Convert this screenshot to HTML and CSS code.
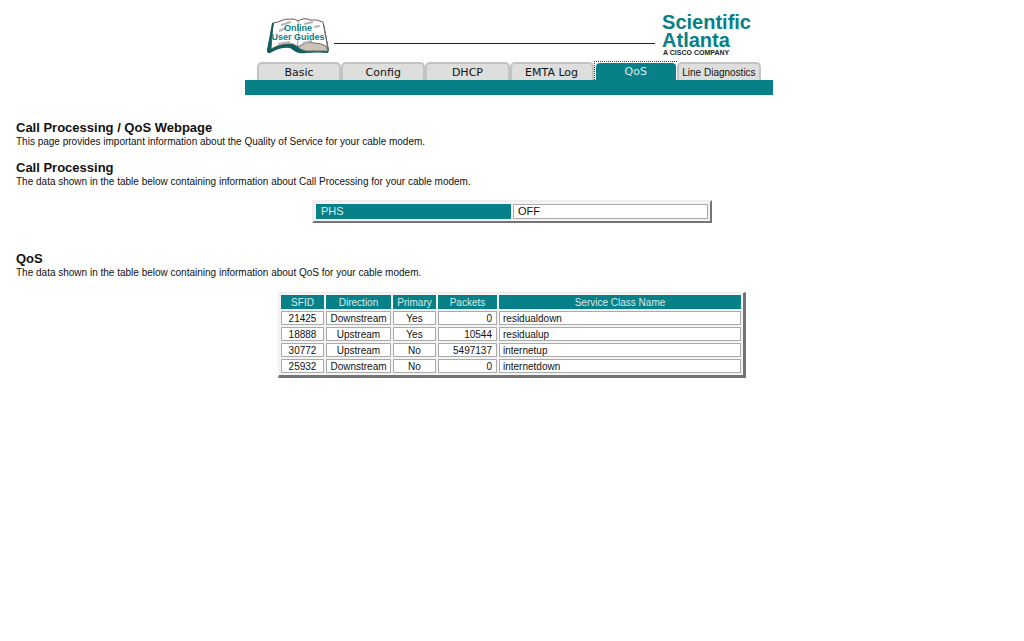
FILE: index.html
```
<!DOCTYPE html>
<html lang="en">
<head>
<meta charset="utf-8">
<title>Call Processing / QoS Webpage</title>
<link rel="stylesheet" href="styles.css">
</head>
<body>
<header class="masthead">
  <div class="masthead-inner">
    <div class="brand-row">
      <a class="guides" href="#guides" aria-label="Online User Guides">
        <svg width="64" height="40" viewBox="0 0 64 40">
          <path d="M7 7 L1 34 Q1 38 4 37 Q14 31 24 32 L30 36 Q34 38 40 37 Q52 36 62 37 L63 34 L58 8Z" fill="#0b5f60"/>
          <path d="M7 7 L12 6 Q20 2 26 3 Q30 3 32 5 Q38 1 44 4 Q50 3 57 6 L62 33 Q45 28 32 31 L27 28 Q15 27 5 33Z" fill="#fff" stroke="#6d5a58" stroke-width="1"/>
          <path d="M34 30 Q40 25 48 27 Q55 27 60 30 L62 35 Q50 35 40 35 Q34 34 31 30Z" fill="#c9c3b5" stroke="#716b62" stroke-width="1"/>
          <path d="M7 7 L2 35" fill="none" stroke="#0b5f60" stroke-width="2"/>
          <path d="M32 5 Q34 16 31 30" fill="none" stroke="#a7a1a0"/>
          <path d="M15 9 L25 6 M13 15 L20 12 M38 8 L47 6 M48 11 L54 10 M12 28 L24 26 M37 27 L46 25" stroke="#b5b5b5" stroke-width="2"/>
          <text x="32" y="15" class="guides-text">Online</text>
          <text x="32" y="24" class="guides-text">User Guides</text>
        </svg>
      </a>
      <div class="rule"></div>
      <div class="logo">
        <span class="logo-name">Scientific</span>
        <span class="logo-name">Atlanta</span>
        <span class="logo-sub">A CISCO COMPANY</span>
      </div>
    </div>
    <nav class="tabs">
      <a class="tab" href="#basic">Basic</a>
      <a class="tab" href="#config">Config</a>
      <a class="tab" href="#dhcp">DHCP</a>
      <a class="tab" href="#emta">EMTA Log</a>
      <a class="tab-active" href="#qos" aria-current="page"><span class="tab-fill">QoS</span></a>
      <a class="tab tab-narrow" href="#line">Line Diagnostics</a>
    </nav>
  </div>
</header>
<main>
  <section class="intro">
    <h1>Call Processing / QoS Webpage</h1>
    <p>This page provides important information about the Quality of Service for your cable modem.</p>
  </section>
  <section class="call">
    <h2>Call Processing</h2>
    <p>The data shown in the table below containing information about Call Processing for your cable modem.</p>
    <table class="grid status">
      <tr><th scope="row">PHS</th><td>OFF</td></tr>
    </table>
  </section>
  <section>
    <h2>QoS</h2>
    <p>The data shown in the table below containing information about QoS for your cable modem.</p>
    <table class="grid flows">
      <colgroup><col class="c-id"><col class="c-dir"><col class="c-pri"><col class="c-pkt"><col></colgroup>
      <thead>
        <tr><th>SFID</th><th>Direction</th><th>Primary</th><th>Packets</th><th>Service Class Name</th></tr>
      </thead>
      <tbody>
        <tr><td>21425</td><td>Downstream</td><td>Yes</td><td class="num">0</td><td class="name">residualdown</td></tr>
        <tr><td>18888</td><td>Upstream</td><td>Yes</td><td class="num">10544</td><td class="name">residualup</td></tr>
        <tr><td>30772</td><td>Upstream</td><td>No</td><td class="num">5497137</td><td class="name">internetup</td></tr>
        <tr><td>25932</td><td>Downstream</td><td>No</td><td class="num">0</td><td class="name">internetdown</td></tr>
      </tbody>
    </table>
  </section>
</main>
</body>
</html>
```
FILE: styles.css
```
* { box-sizing: border-box; }

body {
  margin: 0;
  padding: 12px 16px;
  background: #fff;
  color: #111;
  font: 10px/14px "Liberation Sans", Arial, sans-serif;
}

a { color: inherit; text-decoration: none; }

.masthead { padding-right: 6px; }

.masthead-inner {
  max-width: 528px;
  margin: 0 auto;
}

.brand-row {
  display: flex;
  align-items: flex-start;
  padding: 0 22px 0 21px;
  height: 49px;
}

.guides { padding-top: 4px; }
.guides svg { display: block; }

.guides-text {
  font: bold 9px "Liberation Sans", Arial, sans-serif;
  fill: #078087;
  text-anchor: middle;
}

.rule {
  flex: 1;
  margin: 31px 7px 0 4px;
  border-top: 1px solid #222;
}

.logo {
  padding-top: 1px;
  color: #078087;
}

.logo-name {
  display: block;
  font-size: 20px;
  line-height: 18px;
  font-weight: bold;
}

.logo-sub {
  display: block;
  font-size: 7px;
  line-height: 8px;
  font-weight: bold;
  color: #222;
  white-space: nowrap;
  padding-left: 1px;
}

.tabs {
  display: flex;
  align-items: flex-end;
  padding: 0 12px;
  border-bottom: 15px solid #078087;
}

.tab, .tab-active {
  flex: 1 1 0;
  font: 11px/18px "DejaVu Sans", Verdana, sans-serif;
  text-align: center;
  white-space: nowrap;
}

.tab {
  height: 18px;
  border: 2px solid #c3c3c1;
  border-bottom: 0;
  border-radius: 5px 5px 0 0;
  background: #dededc;
}

.tab-active {
  height: 19px;
  border-top: 1px dotted #333;
  border-left: 1px dotted #333;
  padding: 1px 1px 0;
  color: #d5eeee;
}

.tab-fill {
  display: block;
  height: 17px;
  border-radius: 4px 4px 0 0;
  background: #078087;
}

.tab-narrow {
  font-family: "Liberation Sans", Arial, sans-serif;
  font-size: 10px;
}

main { padding-top: 25px; }

h1, h2 {
  margin: 0;
  font-size: 13px;
  line-height: 15px;
  font-weight: bold;
}

p { margin: 0; }

.intro { margin-bottom: 11px; }
.call { margin-bottom: 28px; }

.grid {
  table-layout: fixed;
  border-collapse: separate;
  border-spacing: 2px;
  border-style: solid;
  border-color: #eee #747474 #747474 #eee;
  background: #f4f4f4;
  margin: 0 auto;
}

.grid th, .grid td {
  padding: 0;
  border: 1px solid #aaa;
  background: #fff;
  font-weight: normal;
}

.grid th {
  border-color: #078087;
  background: #078087;
  color: #d5eeee;
}

.status {
  width: 400px;
  max-width: 100%;
  margin-top: 11px;
  border-width: 2px;
}

.grid.status th, .grid.status td {
  padding: 0 4px;
  font-size: 11px;
  line-height: 13px;
  text-align: left;
}

.flows {
  width: 468px;
  max-width: 100%;
  margin-top: 12px;
  border-width: 1px 3px 3px 1px;
  text-align: center;
  line-height: 10px;
}

.grid.flows th, .grid.flows td { padding-top: 2px; }

.c-id, .c-pri { width: 43px; }
.c-dir { width: 65px; }
.c-pkt { width: 59px; }

.grid .num { padding-right: 4px; text-align: right; }
.grid .name { padding-left: 3px; text-align: left; }
```
